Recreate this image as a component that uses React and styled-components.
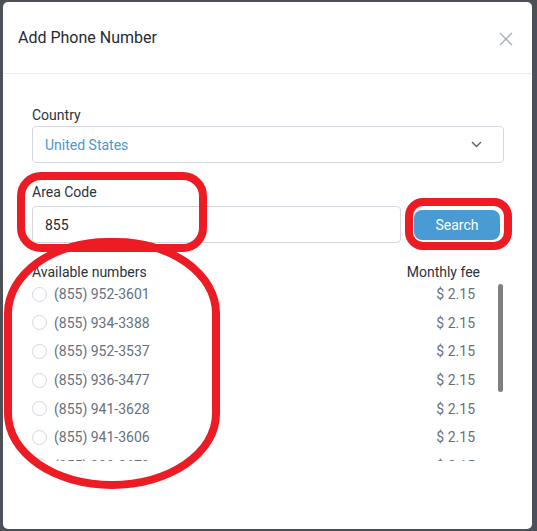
import React from 'react';
import styled, { createGlobalStyle } from 'styled-components';

const GlobalStyle = createGlobalStyle`
    html, body {
        margin: 0;
        padding: 0;
        background: #4b5157;
    }
    body {
        font-family: Roboto, "Liberation Sans", Arial, sans-serif;
    }
`

const Page = styled.div`
    padding: 2px 5px 2px 3px;
`
const Modal = styled.div`
    position: relative;
    width: 529px;
    height: 527px;
    background: #ffffff;
    border-radius: 5px;
    overflow: hidden;
`
const Header = styled.div`
    display: flex;
    align-items: center;
    justify-content: space-between;
    height: 71px;
    padding: 0 19px 0 15px;
    border-bottom: 1px solid #eceef0;
`
const Title = styled.h3`
    margin: 0;
    font-size: 16px;
    font-weight: 400;
    color: #262b31;
`
const CloseButton = styled.button`
    border: 0;
    background: none;
    padding: 0;
    width: 14px;
    height: 14px;
    display: flex;
    margin-top: 2px;
`
const Body = styled.div`
    padding: 33px 28px 0 29px;
`
const Label = styled.div`
    font-size: 14px;
    line-height: 16px;
    color: #2b333b;
    margin-bottom: ${props => props.gap || 3}px;
`
const Select = styled.div`
    display: flex;
    align-items: center;
    justify-content: space-between;
    height: 35px;
    padding: 0 21px 0 12px;
    border: 1px solid #d4d8de;
    border-radius: 4px;
    font-size: 14px;
    color: #4a97d2;
`
const Field = styled.div`
    margin-top: ${props => props.top || 0}px;
`
const SearchRow = styled.div`
    display: flex;
    align-items: center;
    gap: 13px;
`
const Input = styled.div`
    flex: 1;
    height: 35px;
    display: flex;
    align-items: center;
    padding-left: 12px;
    border: 1px solid #d4d8de;
    border-radius: 4px;
    font-size: 14px;
    color: #222830;
`
const SearchButton = styled.button`
    width: 86px;
    height: 30px;
    margin-right: 4px;
    border: 0;
    border-radius: 8px;
    background: #4a9ad4;
    color: #ffffff;
    font-family: inherit;
    font-size: 14px;
    box-shadow: 0 0 0 5px #ffffff, 0 0 0 7px #3cb044;
`
const ListHead = styled.div`
    display: flex;
    justify-content: space-between;
    margin-top: 21px;
    padding-right: 24px;
    font-size: 14px;
    line-height: 16px;
    color: #2b333b;
`
const ListFrame = styled.div`
    position: relative;
`
const List = styled.div`
    height: 181px;
    overflow-y: auto;
    scrollbar-width: none;

    &::-webkit-scrollbar {
        display: none;
    }
`
const Thumb = styled.div`
    position: absolute;
    right: 1px;
    top: 4px;
    width: 5px;
    height: 108px;
    border-radius: 3px;
    background: #808080;
`
const Row = styled.label`
    display: flex;
    align-items: center;
    height: 28.6px;
    padding-right: 29px;
    font-size: 14px;
    color: #66717b;
`
const Radio = styled.span`
    width: 13px;
    height: 13px;
    border: 1px solid #d3d8de;
    border-radius: 50%;
    margin-right: 7px;
`
const Number = styled.span`
    flex: 1;
`
const Mark = styled.div`
    position: absolute;
    border: 8px solid #ed1c24;
    box-sizing: border-box;
    pointer-events: none;
`
const AreaMark = styled(Mark)`
    left: 14px;
    top: 170px;
    width: 190px;
    height: 80px;
    border-radius: 24px;
`
const SearchMark = styled(Mark)`
    left: 402px;
    top: 196px;
    width: 107px;
    height: 52px;
    border-radius: 18px;
`
const ListMark = styled(Mark)`
    left: 1px;
    top: 236px;
    width: 216px;
    height: 251px;
    border-radius: 48% 48% 50% 50% / 30% 30% 30% 30%;
`

const numbers = [
    '(855) 952-3601',
    '(855) 934-3388',
    '(855) 952-3537',
    '(855) 936-3477',
    '(855) 941-3628',
    '(855) 941-3606',
    '(855) 938-3679',
    '(855) 945-3612',
    '(855) 947-3580',
    '(855) 949-3603',
];

const App = () => (
    <Page>
        <GlobalStyle />
        <Modal>
            <Header>
                <Title>Add Phone Number</Title>
                <CloseButton>
                    <svg width="14" height="14" viewBox="0 0 14 14">
                        <path d="M1 1L13 13M13 1L1 13" stroke="#a9afb5" strokeWidth="1.4" />
                    </svg>
                </CloseButton>
            </Header>
            <Body>
                <Label>Country</Label>
                <Select>
                    United States
                    <svg width="11" height="7" viewBox="0 0 11 7">
                        <path d="M1 1L5.5 5.5L10 1" stroke="#56606a" strokeWidth="1.4" fill="none" />
                    </svg>
                </Select>
                <Field top={21}>
                    <Label gap={6}>Area Code</Label>
                    <SearchRow>
                        <Input>855</Input>
                        <SearchButton>Search</SearchButton>
                    </SearchRow>
                </Field>
                <ListHead>
                    <span>Available numbers</span>
                    <span>Monthly fee</span>
                </ListHead>
                <ListFrame>
                    <List>
                        {numbers.map(n => (
                            <Row key={n}>
                                <Radio />
                                <Number>{n}</Number>
                                <span>$ 2.15</span>
                            </Row>
                        ))}
                    </List>
                    <Thumb />
                </ListFrame>
            </Body>
            <AreaMark />
            <SearchMark />
            <ListMark />
        </Modal>
    </Page>
);

export default App;
